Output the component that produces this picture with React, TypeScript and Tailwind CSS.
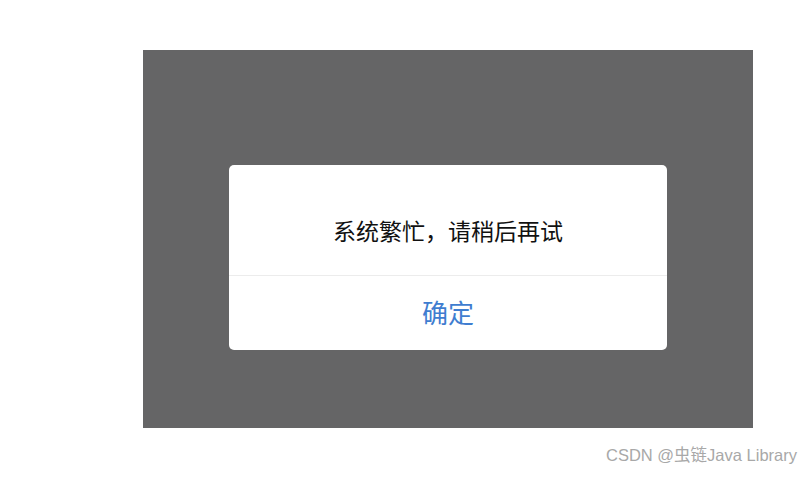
import React from 'react';

const cjk = { fontFamily: '"Noto Sans CJK SC", "Noto Sans", sans-serif' };

export default function App() {
  return (
    <div className="w-[812px] h-[477px] bg-white relative overflow-hidden" style={cjk}>
      <div className="pt-[50px] pl-[143px]">
        {/* dimmed backdrop */}
        <div className="w-[610px] h-[378px] bg-[#656566] pt-[115px] pl-[86px]">
          {/* alert dialog */}
          <div className="w-[438px] h-[185px] bg-white rounded-[5px] flex flex-col overflow-hidden">
            <div className="h-[110px] flex items-center justify-center pt-[21px]">
              <span className="text-[23px] leading-none text-[#111]">系统繁忙，请稍后再试</span>
            </div>
            <div className="h-[1px] bg-[#ececec]" />
            <div className="flex-1 flex items-center justify-center pb-[3px]">
              <span className="text-[26px] leading-none text-[#3f7dd0]">确定</span>
            </div>
          </div>
        </div>
      </div>
      {/* watermark */}
      <div className="flex justify-end pr-[15px] pt-[19px]">
        <span
          className="text-[16.5px] leading-none text-[#a8a8a8]"
          style={{ fontFamily: '"Liberation Sans", "Noto Sans CJK SC", sans-serif' }}
        >
          CSDN @虫链Java Library
        </span>
      </div>
    </div>
  );
}
